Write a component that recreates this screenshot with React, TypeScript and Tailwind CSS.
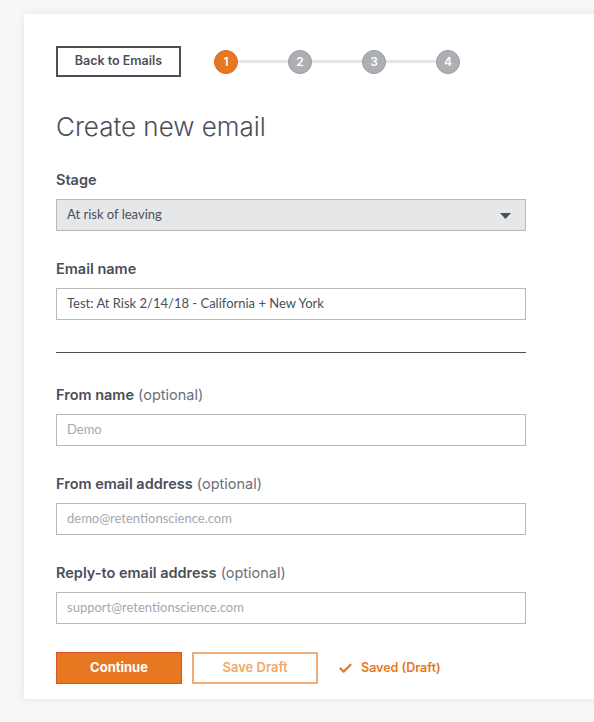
import React from 'react';
import { Check } from 'lucide-react';

const steps = [1, 2, 3, 4];

function Field({ label, optional, value, placeholder }: { label: string; optional?: boolean; value?: string; placeholder?: string }) {
  return (
    <div>
      <label className="block text-[14.5px] font-semibold text-[#4a4f5a] leading-[20px]">
        {label}
        {optional && <span className="font-normal text-[#6b7079]"> (optional)</span>}
      </label>
      <div className="mt-[9px] flex items-center w-full h-[32px] border border-[#b8b8b8] bg-white px-[10px] font-['Lato',sans-serif] text-[13px]">
        {value ? (
          <span className="text-[#4a4f5a]">{value}</span>
        ) : (
          <span className="text-[#a5a8ad]">{placeholder}</span>
        )}
      </div>
    </div>
  );
}

export default function App() {
  return (
    <div className="min-h-[722px] bg-[#f7f7f7] pt-[14px] pl-[24px] font-['Inter',sans-serif]">
      <div className="bg-white shadow-[0_0_8px_rgba(0,0,0,0.08)] pl-[32px] pr-[78px] pt-[32px] pb-[15px] w-[580px]">
        <div className="flex items-center">
          <button className="w-[125px] h-[31px] border-2 border-[#4a4f5a] text-[12.5px] font-semibold text-[#4a4f5a]">
            Back to Emails
          </button>
          <div className="flex items-center ml-[33px]">
            {steps.map((s, i) => (
              <React.Fragment key={s}>
                {i > 0 && <div className="w-[50px] h-[3px] bg-[#e6e6e6]" />}
                <div
                  className={
                    s === 1
                      ? 'w-[24px] h-[24px] rounded-full bg-[#e87722] border border-[#d9662a] text-white text-[12px] font-semibold flex items-center justify-center'
                      : 'w-[24px] h-[24px] rounded-full bg-[#acafb3] border border-[#979aa0] text-white text-[12px] font-semibold flex items-center justify-center'
                  }
                >
                  {s}
                </div>
              </React.Fragment>
            ))}
          </div>
        </div>

        <h1 className="mt-[34px] text-[26px] font-light text-[#4a4f5a] leading-[32px]">Create new email</h1>

        <div className="mt-[27px]">
          <label className="block text-[14.5px] font-semibold text-[#4a4f5a] leading-[20px]">Stage</label>
          <div className="mt-[9px] relative h-[32px] border border-[#b8b8b8] bg-[#e6e7e8] flex items-center px-[10px] font-['Lato',sans-serif] text-[13px] text-[#4a4f5a]">
            At risk of leaving
            <svg className="absolute right-[14px] top-[13px]" width="11" height="6" viewBox="0 0 11 6">
              <path d="M0 0h11L5.5 6z" fill="#4a4f5a" />
            </svg>
          </div>
        </div>

        <div className="mt-[28px]">
          <Field label="Email name" value="Test: At Risk 2/14/18 - California + New York" />
        </div>

        <div className="mt-[32px] h-px bg-[#4a4f5a]" />

        <div className="mt-[32px] flex flex-col gap-[28px]">
          <Field label="From name" optional placeholder="Demo" />
          <Field label="From email address" optional placeholder="demo@retentionscience.com" />
          <Field label="Reply-to email address" optional placeholder="support@retentionscience.com" />
        </div>

        <div className="mt-[28px] flex items-center">
          <button className="w-[126px] h-[32px] bg-[#e87722] border border-[#d9532b] text-white text-[13px] font-bold">
            Continue
          </button>
          <button className="ml-[10px] w-[126px] h-[32px] bg-white border-2 border-[#f2ad76] text-[#f0a96c] text-[13px] font-semibold">
            Save Draft
          </button>
          <div className="ml-[20px] flex items-center text-[#e87722] text-[12.5px] font-semibold">
            <Check size={15} strokeWidth={3.5} />
            <span className="ml-[8px]">Saved (Draft)</span>
          </div>
        </div>
      </div>
    </div>
  );
}
